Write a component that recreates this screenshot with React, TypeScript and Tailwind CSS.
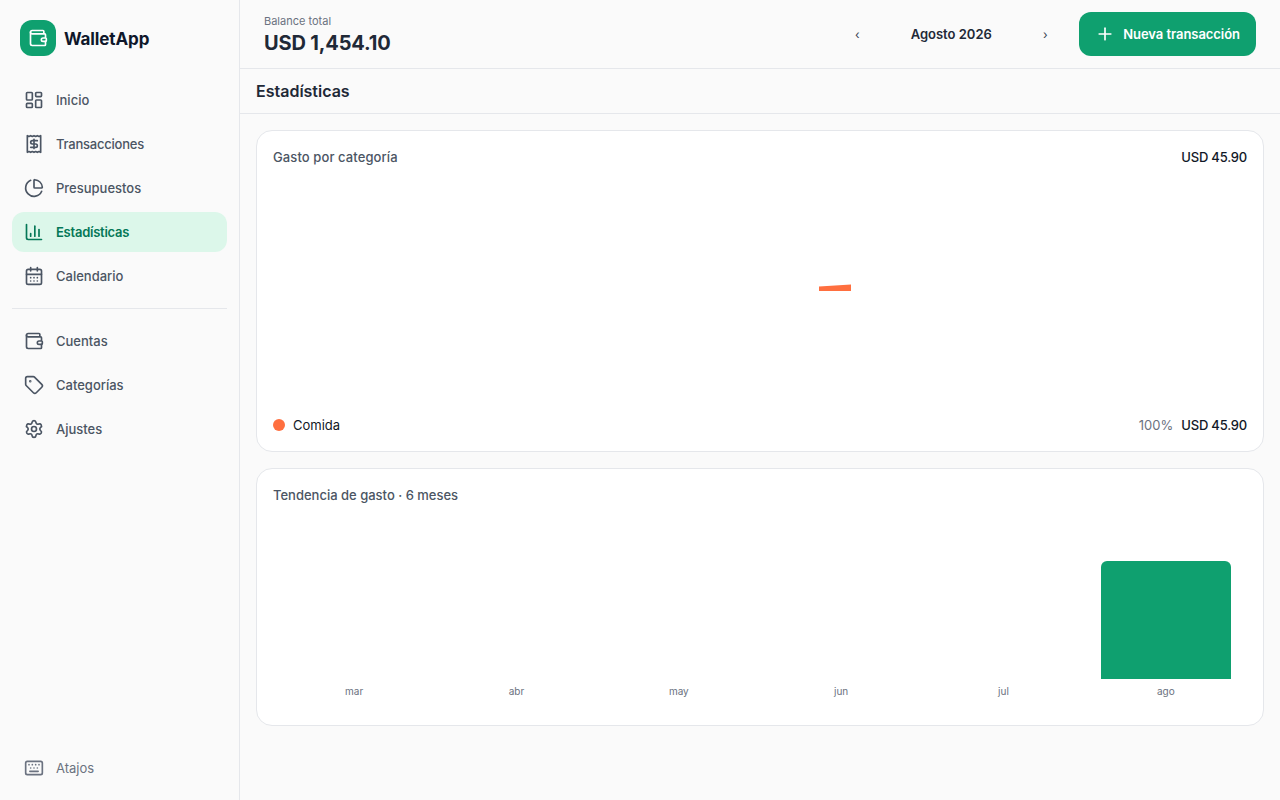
import React from "react";
import { Receipt, ChartPie, ChartColumn, CalendarDays, Wallet, Tag, Settings, Keyboard, Plus, LayoutDashboard } from "lucide-react";

const navTop = [
  { label: "Inicio", Icon: LayoutDashboard },
  { label: "Transacciones", Icon: Receipt, tight: true },
  { label: "Presupuestos", Icon: ChartPie },
  { label: "Estadísticas", Icon: ChartColumn, active: true },
  { label: "Calendario", Icon: CalendarDays },
];
const navBottom = [
  { label: "Cuentas", Icon: Wallet },
  { label: "Categorías", Icon: Tag },
  { label: "Ajustes", Icon: Settings },
];

function NavItem({ label, Icon, active, tight }: { label: string; Icon: React.ComponentType<any>; active?: boolean; tight?: boolean }) {
  return (
    <div
      className={
        active
          ? "flex h-10 items-center gap-3 rounded-xl bg-[#dcf7ea] px-3 text-[13px] font-semibold tracking-[-0.25px] text-[#047857]"
          : "flex h-10 items-center gap-3 rounded-xl px-3 text-[13px] font-medium text-[#4b5563]"
      }
    >
      <Icon size={20} strokeWidth={2} />
      <span className={tight ? "pt-[2px] tracking-[-0.23px]" : "pt-[2px]"}>{label}</span>
    </div>
  );
}

const months = ["mar", "abr", "may", "jun", "jul", "ago"];

export default function App() {
  return (
    <div className="flex h-[800px] w-[1280px] overflow-hidden bg-[#fafafa] font-['Inter',sans-serif] text-[#111827]">
      <aside className="flex w-[240px] shrink-0 flex-col border-r border-[#e5e7eb] bg-[#fafafa] px-3 pb-3">
        <div className="flex h-[80px] items-start gap-2 px-2 pt-5">
          <div className="flex h-9 w-9 items-center justify-center rounded-xl bg-[#0fa06f] text-white">
            <Wallet size={20} strokeWidth={2} />
          </div>
          <span className="pt-px text-[17px] font-bold leading-9 tracking-[-0.1px] text-[#0f172a]">WalletApp</span>
        </div>
        <nav className="flex flex-col gap-1">
          {navTop.map((n) => (
            <NavItem key={n.label} {...n} />
          ))}
        </nav>
        <div className="my-3 h-px bg-[#e5e7eb]" />
        <nav className="flex flex-col gap-1">
          {navBottom.map((n) => (
            <NavItem key={n.label} {...n} />
          ))}
        </nav>
        <div className="mt-auto flex h-10 items-center gap-3 px-3 text-[13px] text-[#6b7280]">
          <Keyboard size={20} strokeWidth={2} />
          <span className="pt-[2px]">Atajos</span>
        </div>
      </aside>
      <main className="flex min-w-0 flex-1 flex-col">
        <header className="flex h-[69px] items-center justify-between border-b border-[#e5e7eb] px-6">
          <div className="flex flex-col pt-[2px]">
            <span className="text-[11px] leading-4 text-[#6b7280]">Balance total</span>
            <span className="text-[20px] font-bold leading-7 tracking-[-0.15px] text-[#1f2937]">USD 1,454.10</span>
          </div>
          <div className="flex items-center">
            <span className="flex w-6 justify-center pt-[2px] text-[12px] text-[#374151]">‹</span>
            <span className="w-[164px] pt-[2px] text-center text-[13px] font-semibold text-[#1f2937]">Agosto 2026</span>
            <span className="flex w-6 justify-center pt-[2px] text-[12px] text-[#374151]">›</span>
            <button className="ml-[22px] flex h-11 items-center gap-2 rounded-xl bg-[#0fa06f] px-4 text-[13px] font-semibold tracking-[-0.05px] text-white">
              <Plus size={20} strokeWidth={2} />
              <span className="pt-[2px]">Nueva transacción</span>
            </button>
          </div>
        </header>
        <div className="flex h-[45px] items-center border-b border-[#e5e7eb] px-4">
          <h1 className="text-[16px] font-semibold text-[#1f2937]">Estadísticas</h1>
        </div>
        <div className="flex flex-col gap-4 p-4">
          <section className="flex h-[322px] flex-col rounded-2xl border border-[#e5e7eb] bg-white p-4">
            <div className="flex items-center justify-between text-[13px] leading-5">
              <span className="font-medium tracking-[0.1px] text-[#4b5563]">Gasto por categoría</span>
              <span className="font-medium tracking-[-0.2px] text-[#111827]">USD 45.90</span>
            </div>
            <div className="flex h-[240px] items-center justify-center">
              <svg className="ml-[150px]" width="200" height="200" viewBox="0 0 200 200">
                <path d="M84 99.5 L116 97.5 L116 104 L84 104 Z" fill="#ff6f3f" />
              </svg>
            </div>
            <div className="mt-auto flex items-center justify-between text-[13px] leading-5">
              <div className="flex items-center gap-2">
                <span className="h-3 w-3 rounded-full bg-[#ff6f3f]" />
                <span className="text-[#111827]">Comida</span>
              </div>
              <div className="flex items-center gap-2">
                <span className="text-[#6b7280]">100%</span>
                <span className="font-medium tracking-[-0.2px] text-[#111827]">USD 45.90</span>
              </div>
            </div>
          </section>
          <section className="flex h-[258px] flex-col rounded-2xl border border-[#e5e7eb] bg-white px-4 pt-4 pb-7">
            <span className="text-[13px] font-medium leading-5 text-[#4b5563]">Tendencia de gasto · 6 meses</span>
            <div className="mt-auto grid grid-cols-6">
              {months.map((m, i) => (
                <div key={m} className="flex h-[185px] flex-col items-center justify-end px-4">
                  {i === 5 && <div className="h-[118px] w-full rounded-t-md bg-[#0fa06f]" />}
                  <span className="mt-1.5 text-[10px] leading-3 text-[#6b7280]">{m}</span>
                </div>
              ))}
            </div>
          </section>
        </div>
      </main>
    </div>
  );
}
